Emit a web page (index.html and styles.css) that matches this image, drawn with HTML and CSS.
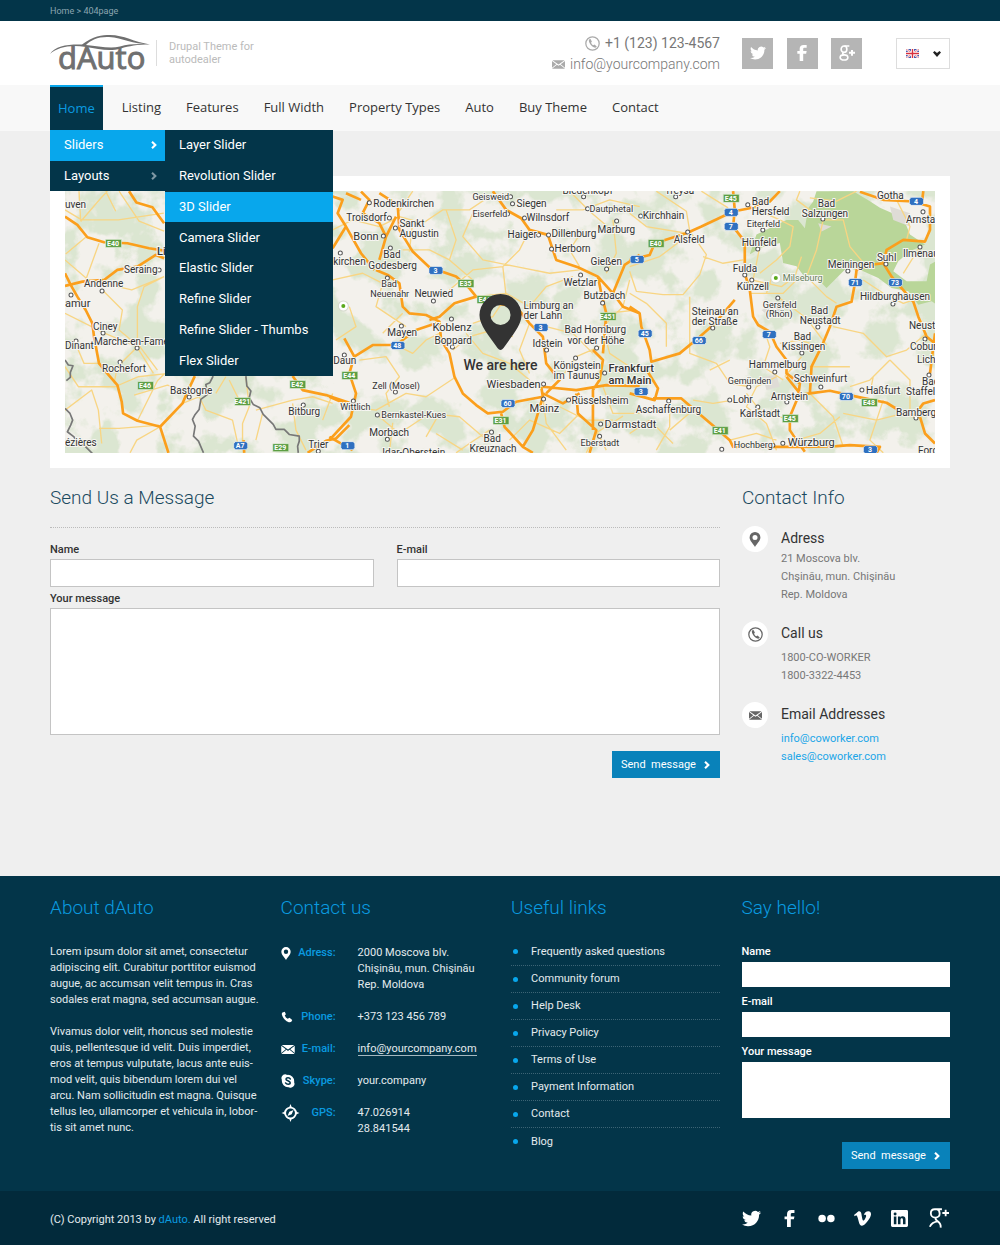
FILE: index.html
```html
<!DOCTYPE html>
<html lang="en">
<head>
<meta charset="utf-8">
<meta name="viewport" content="width=device-width, initial-scale=1">
<title>dAuto - Contact</title>
<link rel="stylesheet" href="styles.css">
</head>
<body>
<svg class="sprite" aria-hidden="true">
  <symbol id="twitter" viewBox="0 0 24 24"><path d="M23.953 4.57a10 10 0 01-2.825.775 4.958 4.958 0 002.163-2.723c-.951.555-2.005.959-3.127 1.184a4.92 4.92 0 00-8.384 4.482C7.69 8.095 4.067 6.13 1.64 3.162a4.822 4.822 0 00-.666 2.475c0 1.71.87 3.213 2.188 4.096a4.904 4.904 0 01-2.228-.616v.06a4.923 4.923 0 003.946 4.827 4.996 4.996 0 01-2.212.085 4.936 4.936 0 004.604 3.417 9.867 9.867 0 01-6.102 2.105c-.39 0-.779-.023-1.17-.067a13.995 13.995 0 007.557 2.209c9.053 0 13.998-7.496 13.998-13.985 0-.21 0-.42-.015-.63A9.935 9.935 0 0024 4.59z"/></symbol>
  <symbol id="facebook" viewBox="0 0 24 24"><path d="M8.500 24V13H5V9h3.500V6c0-4 2-6 6-6H19v4.200h-3c-1.600 0-2.200.8-2.200 2V9H19l-.8 4h-4.400v11z"/></symbol>
  <symbol id="gplus" viewBox="0 0 24 24"><g fill="none" stroke="currentColor" stroke-width="2.400"><ellipse cx="7.500" cy="6.300" rx="4.300" ry="4.800"/><path d="M8 1.500h7.500M7 11c-2.500 1.500-1.500 3 1 4"/><ellipse cx="7.500" cy="18.700" rx="5.800" ry="3.900"/></g><path d="M18 7.500h3v2.700h3v3h-3V16h-3v-2.800h-3v-3h3z"/></symbol>
  <symbol id="gplus-thin" viewBox="0 0 24 24"><g fill="none" stroke="currentColor" stroke-width="2.200"><path d="M15.500 1.500H7C4 1.500 2.200 3.600 2.200 6.200S4 11.500 7.500 11.500s5.300-2 5.300-5S11.500 2.200 9.500 1.500M8 11.500c-1 2 .5 3 2.500 4.500S14.500 19.500 14 23.500M10.500 16C6 16.500 3 18 1 22.500M16 6h8M20 2v8"/></g></symbol>
  <symbol id="vimeo" viewBox="0 0 24 24"><path d="M23.977 6.416c-.105 2.338-1.739 5.543-4.894 9.609-3.268 4.247-6.026 6.37-8.29 6.37-1.409 0-2.578-1.294-3.553-3.881L5.322 11.4C4.603 8.816 3.834 7.522 3.01 7.522c-.179 0-.806.378-1.881 1.132L0 7.197a315.065 315.065 0 003.501-3.128C5.08 2.701 6.266 1.984 7.055 1.91c1.867-.18 3.016 1.1 3.447 3.838.465 2.953.789 4.789.971 5.507.539 2.45 1.131 3.674 1.776 3.674.502 0 1.256-.796 2.265-2.385 1.004-1.589 1.54-2.797 1.612-3.628.144-1.371-.395-2.061-1.614-2.061-.574 0-1.167.121-1.777.391 1.186-3.868 3.434-5.757 6.762-5.637 2.473.06 3.628 1.664 3.493 4.797l-.013.01z"/></symbol>
  <symbol id="flickr" viewBox="0 0 24 24"><circle cx="5.800" cy="12" r="5.300"/><circle cx="18.200" cy="12" r="5.300"/></symbol>
  <symbol id="linkedin" viewBox="0 0 24 24"><path fill-rule="evenodd" d="M2 0h20a2 2 0 012 2v20a2 2 0 01-2 2H2a2 2 0 01-2-2V2a2 2 0 012-2zm2 9v11h3.600V9zM5.800 3.500a2.100 2.100 0 100 4.200 2.100 2.100 0 000-4.200zM9.800 9v11h3.600v-6c0-1.500.6-2.400 1.800-2.400s1.700.9 1.700 2.400v6h3.600v-6.700c0-3-1.500-4.600-3.900-4.600-1.600 0-2.600.8-3.200 1.800V9z"/></symbol>
  <symbol id="phone" viewBox="0 0 24 24"><path d="M7.500 1.500L3 3c-1.500 1-1.600 3-1 5 2 7 7 12 13.500 14.300 2.500.9 4.500.2 5.500-1.300l1.500-3-5.500-4.500-3.500 2c-2.500-1-4.800-3.600-6-6.500L9.800 6.500z"/></symbol>
  <symbol id="phone-ring" viewBox="0 0 24 24"><circle cx="12" cy="12" r="10.700" fill="none" stroke="currentColor" stroke-width="2"/><path d="M8.500 4.500L6.200 6c-.7 4 3.800 10.800 8.800 12.500 1.500.4 3-.3 3.800-1.800l-3.600-3-1.900 1.100c-1.600-.7-2.900-2.400-3.600-4.200l1.300-2z"/></symbol>
  <symbol id="mail" viewBox="0 0 24 16"><path d="M0 1.500L8 7.500 0 14zM24 1.500L16 7.500 24 14zM.8 0h22.400L12 8.200zM9.200 8.500L12 10.500l2.800-2L24 16H0z"/></symbol>
  <symbol id="pin" viewBox="0 0 24 32"><path fill-rule="evenodd" d="M12 0a11.500 11.500 0 0111.500 11.700C23.500 19 15.500 25 12 32 8.500 25 .5 19 .5 11.700A11.500 11.500 0 0112 0zm0 6.300a5.400 5.400 0 100 10.800 5.400 5.400 0 000-10.800z"/></symbol>
  <symbol id="skype" viewBox="0 0 24 24"><path d="M7 .5a6.500 6.500 0 013.500 1A11 11 0 0122.500 14 6.500 6.500 0 0113.500 22.500 11 11 0 011.500 10 6.500 6.500 0 017 .5z"/><path fill="none" stroke="#033549" stroke-width="2.600" stroke-linecap="round" d="M16 8.500C15 6 9 5.500 8.500 8.600 8.200 12 15.800 11 15.800 15c0 3.500-6.300 3.300-8 .3"/></symbol>
  <symbol id="compass" viewBox="0 0 24 24"><circle cx="12" cy="12" r="7.200" fill="none" stroke="currentColor" stroke-width="2.500"/><path d="M12 0l2 5h-4zM12 24l2-5h-4zM0 12l5-2v4zM24 12l-5-2v4zM16 8l-2.400 5.600L8 16l2.400-5.600z"/></symbol>
  <symbol id="chevron" viewBox="0 0 8 10"><path d="M0 1.800L1.800 0 7 5 1.800 10 0 8.200 3.200 5z"/></symbol>
  <symbol id="flag" viewBox="0 0 13 9"><path fill="#4a5ab0" d="M0 0h13v9H0z"/><path stroke="#fff" stroke-width="2" d="M0 0l13 9M13 0L0 9"/><path stroke="#d8434e" stroke-width=".6" d="M0 0l13 9M13 0L0 9"/><path stroke="#fff" stroke-width="3" d="M6.500 0v9M0 4.500h13"/><path stroke="#d8303e" stroke-width="1.400" d="M6.500 0v9M0 4.500h13"/></symbol>
  <symbol id="motorway" viewBox="0 0 15 9"><path fill="#2f70c0" stroke="#fff" stroke-width=".6" d="M2 .5h11l1.500 2v4l-1.500 2H2L.5 6.500v-4z"/></symbol>
  <symbol id="euroroute" viewBox="0 0 17 9"><path fill="#5c9e43" stroke="#e8f2e0" stroke-width=".6" d="M.5.5h16v8H.5z"/></symbol>
</svg>

<div class="topbar">
  <nav class="wrap" aria-label="Breadcrumb"><a href="#">Home</a> &gt; <a href="#">404page</a></nav>
</div>

<header class="header">
  <div class="wrap header-row">
    <a class="logo" href="#" aria-label="dAuto">
      <svg width="102" height="36" viewBox="0 0 102 36">
        <text class="logo-text" x="8" y="34">dAuto</text>
        <path fill="#707070" d="M0 19C5 11 18 9 32 9.500 43 1 52 0 60 0c14 0 24 7 40 9.500C82 9 73 3 59 2 48 1.500 41 5 36 10c12 1 24 4 34 1.500 9-2.500 18-3 30-2-13 0-21 1.500-29 4-12 3.500-22 .5-35-1.500C20 9.500 8 12 0 19z"/>
      </svg>
    </a>
    <p class="tagline">Drupal Theme for<br>autodealer</p>
    <address class="header-contact">
      <span class="header-phone"><svg width="15" height="15"><use href="#phone-ring"/></svg>+1 (123) 123-4567</span>
      <a class="header-mail" href="#"><svg width="13" height="9"><use href="#mail"/></svg>info@yourcompany.com</a>
    </address>
    <div class="header-tools">
      <a class="social" href="#" aria-label="Twitter"><svg width="16" height="16"><use href="#twitter"/></svg></a>
      <a class="social" href="#" aria-label="Facebook"><svg width="16" height="16"><use href="#facebook"/></svg></a>
      <a class="social" href="#" aria-label="Google Plus"><svg width="16" height="16"><use href="#gplus"/></svg></a>
      <div class="language">
        <select aria-label="Language"><option>EN</option></select>
        <svg class="flag" width="13" height="9"><use href="#flag"/></svg>
        <svg class="arrow" width="8" height="6" viewBox="0 0 8 6"><path d="M0 1.500L1.500 0 4 2 6.500 0 8 1.500 4 6z"/></svg>
      </div>
    </div>
  </div>
</header>

<nav class="mainnav" aria-label="Main">
  <ul class="wrap menu">
    <li class="current"><a href="#">Home</a>
      <div class="dropdown">
        <ul class="level-one">
          <li><a class="active" href="#">Sliders<svg width="7" height="8"><use href="#chevron"/></svg></a></li>
          <li><a href="#">Layouts<svg class="dim" width="7" height="8"><use href="#chevron"/></svg></a></li>
        </ul>
        <ul class="level-two">
          <li><a href="#">Layer Slider</a></li>
          <li><a href="#">Revolution Slider</a></li>
          <li><a class="active" href="#">3D Slider</a></li>
          <li><a href="#">Camera Slider</a></li>
          <li><a href="#">Elastic Slider</a></li>
          <li><a href="#">Refine Slider</a></li>
          <li><a href="#">Refine Slider - Thumbs</a></li>
          <li><a href="#">Flex Slider</a></li>
        </ul>
      </div>
    </li>
    <li><a href="#">Listing</a></li>
    <li><a href="#">Features</a></li>
    <li><a href="#">Full Width</a></li>
    <li><a href="#">Property Types</a></li>
    <li><a href="#">Auto</a></li>
    <li><a href="#">Buy Theme</a></li>
    <li><a href="#">Contact</a></li>
  </ul>
</nav>

<main class="wrap main">
  <div class="map-card">
    <svg class="map" viewBox="66 191 869 262" preserveAspectRatio="xMidYMid slice" role="img" aria-label="Map showing our office">
      <defs>
        <filter id="forest" x="0" y="0" width="100%" height="100%" color-interpolation-filters="sRGB"><feTurbulence type="fractalNoise" baseFrequency=".025" numOctaves="5" seed="8"/><feColorMatrix values="0 0 0 0 .86  0 0 0 0 .9  0 0 0 0 .82  9 0 0 0 -4.200"/></filter>
      </defs>
      <path fill="#f3f1ec" d="M66 191h869v262H66z"/>
      <path filter="url(#forest)" d="M66 191h869v262H66z"/>
      <g transform="translate(630 180) scale(.33333)">
        <path fill="#b9d699" d="M470 120l35 0 20 25 10-60 15-20 10-31h110l50 30 30 20 70 30 20 50 45 30-45 20-35 30-15 30 40 30 60 0 10-50 35-20v150l-30-20-40 10-30-40-50-10-40-30-45-20-50-10-60 60-20-20-40-5-30-40-40-10-10-60-60 15-30 20 20-60z"/>
        <path fill="#dfdcd6" d="M780 80l60 20 0 40-50-20zM400 590l40-5 10 35-40 10zM565 130l40 10-30 15zM395 390l50-25 20 20-40 30z"/>
      </g>
      <g class="thin">
        <g transform="translate(50 180) scale(.33333)">
          <path d="M48 90l50 30 110 0 136-20M90 34l5 90M95 125l60-70 20-21M150 190l-40 110M210 34l60 90 75 30M48 240l70 60 130 30 97-40M345 290l-60 30-20 60 0 110 60 80M160 330l60 60-10 60 60 50M48 400l120 60 95 40 50 80M75 480l30 70 45 0M48 560l40 60 110 0 70-30 90-10M265 500l-60 60-10 50M48 690l80-60 20 60 10 100M150 745l60 0 120-10M170 34l30 60M333 740l-70 40-20 38M265 722l60-120 20-20M400 670l50-20 20 40 80 30 20 90M590 590l10 90-20 50 0 60M540 600l30 60M620 690l110-30 60-10 60 20M730 670l10 80 30 60M850 640l-30 80M500 640l30-50M640 700l-20 80M415 635l-60-20-100 30M110 172l-60 50"/>
        </g>
        <g transform="translate(330 180) scale(.33333)">
          <path d="M10 150l60-30 80 20 60-30 70 20 60-40 80 0 60-40M250 34l-40 60M350 90l30 90-20 60 70 60M430 100l-30 70 60 70 100 20 100 20 90-10M220 210l80 0 60 30M10 300l90-20 60 30-20 70 90 60M60 380l20 60-60 40M90 540l80-10 40 60-40 50 10 40M190 490l60 30 40-40 40-20M370 510l50-40 70-20 60 20M360 330l70-60 90-10 50-50 30-60M440 350l90-10 70 40 50-60 80-30M600 600l-60-50-80-30-50-60M650 440l80 20 60 60M690 600l50-70 70-30M830 400l90-10M680 90l80 0 80-30 90 20M760 150l-40 60 30 50M850 120l10 100-30 60M720 34l60 60 70 60M380 590l-90 60-60-10-90 50-80-10M150 710l60 50 90-60 90 10 70 60M290 770l40-70M320 760l80 50M180 818l10-90M480 750l-60 40-40 28M540 780l60-60 90 40 60-60M640 650l10 80 60 80M690 680l80 40 80 0M800 750l30 60M820 620l30 80 80 0M770 818l30-60 80-50M520 260l10 90-40 60-60 20M600 430l-30 80 30 70M220 400l-60 60M900 300l-20 80-60 60 20 80 60 40M240 215l10-90"/>
        </g>
        <g transform="translate(630 180) scale(.33333)">
          <path d="M0 100l50 40 120 20M80 34l90 60 10 60 50 70-20 60-50 60-60 0-80-10-20-60M220 230l60 20 60-10M0 260l90-30 80-60M180 350l0 120 0 50 80 30 40 60 60 10M0 340l50 30 60 60 0 70M215 34l80 50M360 80l90 40 40 20-10 60-40 40-50 40M390 200l-20 100M365 300l90 20 40-30 20-60M360 340l100 0 50-50M450 355l80 60 60 80M400 440l20 60-20 60 60 40M530 290l60 60 30 20M530 290l30-80 20-90 60 0 20 80 50 60M580 120l-80-60 10-26M610 440l90 20 70 70 60-20 60-50M780 540l-60 60-60 20M780 540l60 60 0 100M515 530l-50 60M570 500l-60-20-60 10M440 590l-60 30-30 60 60 50 30 80M310 660l-60 10-60-10M350 640l40 50 90 30M120 660l0 80-40 70M190 690l-70 60M0 760l60-40 70 70M540 640l70 70 30 90M640 700l100 20 80-20M760 660l-40 120 40 38M700 300l60 40 60 30 60-20M680 34l-60 30-80-10M800 60l40 80-10 40M870 200l-50 80M730 590l-10 50M500 780l70-20 60-50M410 340l20-60M300 780l80-20 60 20M300 540l-60 30M540 560l120 0"/>
        </g>
      </g>
      <g class="border">
        <g transform="translate(50 180) scale(.33333)"><path d="M48 540l10 15 14 2-8 20 0 15-12 10M48 685l15 15 8 20-6 15-10 20 20 15 10 20 20 5 30 30M492 588l-10 20-12 5 5 30-20 15-5 30-12 15-8 15 8 20-5 30 15 15 15 35M590 588l3 30 12 15-5 20 12 20 20 10 10 20 30 30 8 15 25 0 15 15 30 5 0 15-5 15 2 20"/></g>
      </g>
      <g class="thick">
        <g transform="translate(50 180) scale(.33333)">
          <path d="M48 110l37 25 30 37 50 15 70 3 65 15 45 7M48 318l52-13 65-5 40-30 60-10 55-35 25 10M48 280l17 35 20 35 25 40 20 40 5 40 15 80 20 25 35 40 13 50 4 35 43 22 68 18 25 78M333 740l67-70 15-35 22-47M240 34l22 34 48 14 20 28 15 20M585 818l-2-38M730 588l30 42 70 15 70 23M900 735l-40 40-30 7-55 36"/>
        </g>
        <g transform="translate(330 180) scale(.33333)">
          <path d="M10 205l40-65 45 80 40 50M50 140L25 100 40 60 10 50M95 35l25 25-20 40 50 30 20 40M95 60L50 40M150 40l55 35 5 75 40 65 50 47 80 28 40 35 20 25-65 20-45 40-30 10M150 240l20-70 30-60M140 270l35 15 35 25 10 70 20 20 50 5 40 20 5 55 25 40 15 70 25 50 40 35 35 25 45-5 40-30 80-15-5-30M45 475l30 55 55-35 70 0 60-45 60-20M75 530l-15 50 20 60-15 70-65 70M0 650l70 30M0 770l70 40M490 34l40 56 45 25 25 35 55 15 25 75 65 22 60 28 10 50 15 60-10 120M805 290l45 50 35-85 45-30M850 340l30 40 50 20M500 370l60 10 40 50 40 40 10 80 40 50-40 40M640 620l100 10 90-15 100 3M740 640l5 60 55 50-20 68M515 700l10 40 55 60 30-50 30-100M790 510l30 30-10 60-20 30 0 120M640 640l60 30 50-30M580 800l30 18"/>
        </g>
        <g transform="translate(630 180) scale(.33333)">
          <path d="M0 240l60-15 15-35 95-30 45-20 95-45 50-10 60-20 30-31M310 34l5 56-5 50 35 45 0 95 15 50 10 80 15 25 35 20 20 45 30 40 0 40 40 30-5 40-25 60 0 40 20 30 25 35M0 380l30 20 5 40 25 70 5 35 85-25 60-50 40-35 65-75M70 655l85 0 35 30 70 60 40 35 10 20 150 0 60 0 100-2 40-3 90 5-10 18M540 640l5-80 30-60 25-60 20-60 45-15 10-55 5-40 40-15 40-5 25 40 65 75 15 45 25 60 25 20M690 36l70 24 90 5 50 15 0 70-15 35-65-5-50 30-10 40M880 34l-5 40M510 645l30-5 60-8 90 20 80 16 60 37 40 5 15 50 30 30M45 560l40 65-10 35-75-20M850 710l30-40 35-10M915 460l-15 120M470 590l40 50"/>
        </g>
      </g>
      <path class="towns" id="town-dots" d="M160 270h0M103 291h0M72 295h0M104 333h0M77 341h0M138 348h0M121 362h0M190 397h0M304 405h0M319 451h0M370 203h0M390 218h0M396 228h0M384 236h0M391 248h0M341 253h0M388 278h0M434 301h0M452 319h0M402 326h0M453 347h0M345 355h0M396 392h0M354 401h0M378 415h0M388 439h0M492 432h0M511 197h0M513 204h0M508 214h0M525 218h0M539 235h0M549 235h0M552 249h0M584 197h0M588 209h0M617 221h0M607 269h0M581 275h0M603 303h0M547 350h0M597 348h0M576 358h0M605 373h0M544 384h0M544 399h0M569 400h0M601 424h0M600 436h0M641 216h0M688 232h0M748 205h0M763 230h0M758 249h0M745 275h0M752 280h0M823 219h0M848 271h0M886 264h0M920 247h0M923 212h0M778 298h0M893 304h0M713 328h0M818 327h0M802 353h0M775 372h0M749 387h0M821 387h0M862 390h0M730 400h0M787 402h0M758 407h0M669 401h0M773 445h0M783 443h0M722 449h0M916 418h0M925 339h0M929 375h0M676 197h0"/>
      <path class="towns-in" d="M160 270h0M103 291h0M72 295h0M104 333h0M77 341h0M138 348h0M121 362h0M190 397h0M304 405h0M319 451h0M370 203h0M390 218h0M396 228h0M384 236h0M391 248h0M341 253h0M388 278h0M434 301h0M452 319h0M402 326h0M453 347h0M345 355h0M396 392h0M354 401h0M378 415h0M388 439h0M492 432h0M511 197h0M513 204h0M508 214h0M525 218h0M539 235h0M549 235h0M552 249h0M584 197h0M588 209h0M617 221h0M607 269h0M581 275h0M603 303h0M547 350h0M597 348h0M576 358h0M605 373h0M544 384h0M544 399h0M569 400h0M601 424h0M600 436h0M641 216h0M688 232h0M748 205h0M763 230h0M758 249h0M745 275h0M752 280h0M823 219h0M848 271h0M886 264h0M920 247h0M923 212h0M778 298h0M893 304h0M713 328h0M818 327h0M802 353h0M775 372h0M749 387h0M821 387h0M862 390h0M730 400h0M787 402h0M758 407h0M669 401h0M773 445h0M783 443h0M722 449h0M916 418h0M925 339h0M929 375h0M676 197h0"/>
      <g fill="#fff" stroke="#d5d9cc"><circle cx="344" cy="306" r="5"/><circle cx="776" cy="278" r="5"/></g>
      <g fill="#5ba91d"><circle cx="344" cy="306" r="2"/><circle cx="776" cy="278" r="2"/></g>
      <g class="town">
        <text x="66" y="208">uven</text><text x="125" y="273">Seraing</text><text x="85" y="287">Andenne</text><text x="66" y="307" class="mid">amur</text><text x="94" y="330">Ciney</text><text x="66" y="349">Dinant</text><text x="95" y="345">Marche-en-Famenne</text><text x="158" y="255" class="city">Liège</text><text x="103" y="372">Rochefort</text><text x="171" y="394">Bastogne</text><text x="66" y="446">ézières</text><text x="289" y="415">Bitburg</text><text x="309" y="448">Trier</text>
        <text x="374" y="207">Rodenkirchen</text><text x="347" y="221">Troisdorf</text><text x="354" y="240" class="mid">Bonn</text><text x="400" y="227">Sankt</text><text x="400" y="237">Augustin</text><text x="334" y="265">kirchen</text><text x="384" y="258">Bad</text><text x="369" y="269">Godesberg</text><text x="382" y="287" class="small">Bad</text><text x="371" y="297" class="small">Neuenahr</text><text x="415" y="297">Neuwied</text><text x="433" y="331" class="mid">Koblenz</text><text x="388" y="336">Mayen</text><text x="435" y="344">Boppard</text><text x="334" y="364">Daun</text><text x="373" y="389" class="small">Zell (Mosel)</text><text x="341" y="410" class="small">Wittlich</text><text x="382" y="418" class="small">Bernkastel-Kues</text><text x="370" y="436">Morbach</text><text x="383" y="456">Idar-Oberstein</text><text x="484" y="442">Bad</text><text x="470" y="452">Kreuznach</text>
        <text x="473" y="200" class="small">Geisweid</text><text x="517" y="207">Siegen</text><text x="473" y="217" class="small">Eiserfeld</text><text x="527" y="221">Wilnsdorf</text><text x="508" y="238">Haiger</text><text x="552" y="237">Dillenburg</text><text x="555" y="252">Herborn</text><text x="563" y="194">Biedenkopf</text><text x="590" y="212" class="small">Dautphetal</text><text x="598" y="233">Marburg</text><text x="591" y="265">Gießen</text><text x="564" y="286">Wetzlar</text><text x="584" y="299">Butzbach</text><text x="524" y="309">Limburg an</text><text x="524" y="319">der Lahn</text><text x="533" y="347">Idstein</text><text x="565" y="333">Bad Homburg</text><text x="568" y="344">vor der Höhe</text><text x="554" y="369">Königstein</text><text x="554" y="379">im Taunus</text><text x="609" y="372" class="city">Frankfurt</text><text x="609" y="384" class="city">am Main</text><text x="487" y="388" class="mid">Wiesbaden</text><text x="530" y="412" class="mid">Mainz</text><text x="572" y="404">Rüsselsheim</text><text x="605" y="428" class="mid">Darmstadt</text><text x="581" y="446" class="small">Eberstadt</text>
        <text x="665" y="194">Treysa</text><text x="643" y="219">Kirchhain</text><text x="674" y="243">Alsfeld</text><text x="752" y="205">Bad</text><text x="752" y="215">Hersfeld</text><text x="747" y="227" class="small">Eiterfeld</text><text x="742" y="246">Hünfeld</text><text x="733" y="272">Fulda</text><text x="737" y="290">Künzell</text><text x="783" y="281" fill="#667f5b" class="small">Milseburg</text><text x="763" y="308" class="small">Gersfeld</text><text x="766" y="317" class="small">(Rhön)</text><text x="692" y="315">Steinau an</text><text x="692" y="325">der Straße</text><text x="818" y="207">Bad</text><text x="802" y="217">Salzungen</text><text x="877" y="199">Gotha</text><text x="906" y="223">Arnstadt</text><text x="828" y="268">Meiningen</text><text x="877" y="261">Suhl</text><text x="903" y="257">Ilmenau</text><text x="860" y="300">Hildburghausen</text><text x="811" y="314">Bad</text><text x="800" y="324">Neustadt</text><text x="794" y="340">Bad</text><text x="782" y="350">Kissingen</text><text x="909" y="329">Neustadt</text><text x="910" y="350">Coburg</text><text x="917" y="363">Lichtenfels</text><text x="749" y="368">Hammelburg</text><text x="728" y="384" class="small">Gemünden</text><text x="794" y="382">Schweinfurt</text><text x="771" y="400">Arnstein</text><text x="866" y="394">Haßfurt</text><text x="922" y="385">Bad</text><text x="906" y="395">Staffelstein</text><text x="896" y="416">Bamberg</text><text x="733" y="403">Lohr</text><text x="740" y="417">Karlstadt</text><text x="636" y="413">Aschaffenburg</text><text x="734" y="448" class="small">Hochberg</text><text x="788" y="446" class="mid">Würzburg</text><text x="918" y="454">Forchheim</text>
      </g>
      <g>
        <use href="#euroroute" x="106" y="239" width="17" height="9"/><use href="#euroroute" x="138" y="381" width="17" height="9"/><use href="#euroroute" x="235" y="397" width="17" height="9"/><use href="#euroroute" x="290" y="380" width="17" height="9"/><use href="#euroroute" x="273" y="443" width="17" height="9"/><use href="#euroroute" x="458" y="279" width="17" height="9"/><use href="#euroroute" x="477" y="295" width="17" height="9"/><use href="#euroroute" x="342" y="371" width="17" height="9"/><use href="#euroroute" x="493" y="416" width="17" height="9"/><use href="#euroroute" x="600" y="312" width="17" height="9"/><use href="#euroroute" x="648" y="239" width="17" height="9"/><use href="#euroroute" x="723" y="194" width="17" height="9"/><use href="#euroroute" x="712" y="426" width="17" height="9"/><use href="#euroroute" x="782" y="414" width="17" height="9"/><use href="#euroroute" x="861" y="398" width="17" height="9"/>
        <use href="#motorway" x="429" y="266" width="15" height="9"/><use href="#motorway" x="391" y="341" width="15" height="9"/><use href="#motorway" x="341" y="441" width="15" height="9"/><use href="#motorway" x="501" y="399" width="15" height="9"/><use href="#motorway" x="534" y="323" width="15" height="9"/><use href="#motorway" x="630" y="255" width="15" height="9"/><use href="#motorway" x="638" y="329" width="15" height="9"/><use href="#motorway" x="634" y="387" width="15" height="9"/><use href="#motorway" x="724" y="208" width="15" height="9"/><use href="#motorway" x="724" y="222" width="15" height="9"/><use href="#motorway" x="692" y="336" width="15" height="9"/><use href="#motorway" x="762" y="330" width="15" height="9"/><use href="#motorway" x="848" y="278" width="15" height="9"/><use href="#motorway" x="888" y="278" width="15" height="9"/><use href="#motorway" x="839" y="392" width="15" height="9"/><use href="#motorway" x="909" y="197" width="15" height="9"/><use href="#motorway" x="863" y="445" width="15" height="9"/><use href="#motorway" x="234" y="441" width="15" height="9"/>
      </g>
      <g class="shield">
        <text x="114" y="246">E40</text><text x="146" y="388">E46</text><text x="243" y="404">E421</text><text x="298" y="387">E42</text><text x="281" y="450">E29</text><text x="466" y="286">E35</text><text x="485" y="302">E44</text><text x="350" y="378">E44</text><text x="501" y="423">E31</text><text x="608" y="319">E451</text><text x="656" y="246">E40</text><text x="731" y="201">E45</text><text x="720" y="433">E41</text><text x="790" y="421">E45</text><text x="869" y="405">E48</text>
        <text x="436" y="273">3</text><text x="398" y="348">48</text><text x="348" y="448">1</text><text x="508" y="406">60</text><text x="541" y="330">3</text><text x="637" y="262">5</text><text x="645" y="336">45</text><text x="641" y="394">3</text><text x="731" y="215">4</text><text x="731" y="229">7</text><text x="699" y="343">66</text><text x="769" y="337">7</text><text x="855" y="285">71</text><text x="895" y="285">73</text><text x="846" y="399">70</text><text x="916" y="204">4</text><text x="870" y="452">3</text><text x="241" y="448">A7</text>
      </g>
      <path fill="#333" fill-rule="evenodd" d="M501 294a21 21 0 0121 21c0 10-9 20-18 33q-3 4-6 0c-9-13-18-23-18-33a21 21 0 0121-21zm0 11a10 10 0 100 20 10 10 0 000-20z"/>
      <text class="here" x="501" y="370">We are here</text>
    </svg>
  </div>

  <div class="columns">
    <section>
      <h2 class="title">Send Us a Message</h2>
      <form class="message-form">
        <div class="field"><label for="name">Name</label><input id="name" type="text"></div>
        <div class="field"><label for="email">E-mail</label><input id="email" type="email"></div>
        <div class="field full"><label for="message">Your message</label><textarea id="message"></textarea></div>
        <button class="button" type="button">Send&nbsp; message<svg width="7" height="8"><use href="#chevron"/></svg></button>
      </form>
    </section>
    <aside>
      <h2 class="title">Contact Info</h2>
      <div class="info"><span class="bubble"><svg width="12" height="15"><use href="#pin"/></svg></span><div><h3>Adress</h3><p>21 Moscova blv.<br>Chşinău, mun. Chişinău<br>Rep. Moldova</p></div></div>
      <div class="info"><span class="bubble"><svg width="15" height="15"><use href="#phone-ring"/></svg></span><div><h3>Call us</h3><p>1800-CO-WORKER<br>1800-3322-4453</p></div></div>
      <div class="info"><span class="bubble"><svg width="13" height="9"><use href="#mail"/></svg></span><div><h3>Email Addresses</h3><p><a href="#">info@coworker.com</a><br><a href="#">sales@coworker.com</a></p></div></div>
    </aside>
  </div>
</main>

<footer class="footer">
  <div class="wrap footer-grid">
    <section>
      <h2>About dAuto</h2>
      <p>Lorem ipsum dolor sit amet, consectetur<br>adipiscing elit. Curabitur porttitor euismod<br>augue, ac accumsan velit tempus in. Cras<br>sodales erat magna, sed accumsan augue.</p>
      <p>Vivamus dolor velit, rhoncus sed molestie<br>quis, pellentesque id velit. Duis imperdiet,<br>eros at tempus vulputate, lacus ante euis-<br>mod velit, quis bibendum lorem dui vel<br>arcu. Nam sollicitudin est magna. Quisque<br>tellus leo, ullamcorper et vehicula in, lobor-<br>tis sit amet nunc.</p>
    </section>
    <section>
      <h2>Contact us</h2>
      <dl class="contacts">
        <div><dt><svg width="10" height="13"><use href="#pin"/></svg>Adress:</dt><dd>2000 Moscova blv.<br>Chişinău, mun. Chişinău<br>Rep. Moldova</dd></div>
        <div><dt><svg width="12" height="12"><use href="#phone"/></svg>Phone:</dt><dd>+373 123 456 789</dd></div>
        <div><dt><svg width="14" height="9"><use href="#mail"/></svg>E-mail:</dt><dd><a href="#">info@yourcompany.com</a></dd></div>
        <div><dt><svg width="14" height="14"><use href="#skype"/></svg>Skype:</dt><dd>your.company</dd></div>
        <div><dt><svg width="19" height="18"><use href="#compass"/></svg>GPS:</dt><dd>47.026914<br>28.841544</dd></div>
      </dl>
    </section>
    <section>
      <h2>Useful links</h2>
      <ul class="links">
        <li><a href="#">Frequently asked questions</a></li>
        <li><a href="#">Community forum</a></li>
        <li><a href="#">Help Desk</a></li>
        <li><a href="#">Privacy Policy</a></li>
        <li><a href="#">Terms of Use</a></li>
        <li><a href="#">Payment Information</a></li>
        <li><a href="#">Contact</a></li>
        <li><a href="#">Blog</a></li>
      </ul>
    </section>
    <section>
      <h2>Say hello!</h2>
      <form class="hello-form">
        <label for="hello-name">Name</label><input id="hello-name" type="text">
        <label for="hello-email">E-mail</label><input id="hello-email" type="email">
        <label for="hello-message">Your message</label><textarea id="hello-message"></textarea>
        <button class="button" type="button">Send&nbsp; message<svg width="7" height="8"><use href="#chevron"/></svg></button>
      </form>
    </section>
  </div>
  <div class="bottom">
    <div class="wrap bottom-row">
      <p>(C) Copyright 2013 by <a href="#">dAuto.</a> All right reserved</p>
      <div class="bottom-social">
        <a href="#" aria-label="Twitter"><svg width="19" height="19"><use href="#twitter"/></svg></a>
        <a href="#" aria-label="Facebook"><svg width="17" height="17"><use href="#facebook"/></svg></a>
        <a href="#" aria-label="Flickr"><svg width="17" height="17"><use href="#flickr"/></svg></a>
        <a href="#" aria-label="Vimeo"><svg width="17" height="17"><use href="#vimeo"/></svg></a>
        <a href="#" aria-label="LinkedIn"><svg width="17" height="17"><use href="#linkedin"/></svg></a>
        <a href="#" aria-label="Google Plus"><svg width="22" height="20"><use href="#gplus-thin"/></svg></a>
      </div>
    </div>
  </div>
</footer>
</body>
</html>
```
FILE: styles.css
```css
* { box-sizing: border-box; margin: 0; padding: 0; }
body { background: #efefef; color: #333; font: 11px/16px Roboto, "Noto Sans", sans-serif; }
a { color: inherit; text-decoration: none; }
ul { list-style: none; }
svg { fill: currentColor; flex: none; }
.sprite { position: absolute; width: 0; height: 0; }
.wrap { width: 100%; max-width: 1300px; margin: 0 auto; padding: 0 50px; }

.topbar { padding-top: 1px; background: #033549; color: #8ba5b0; font-size: 9px; line-height: 20px; }

.header { background: #fff; }
.header-row { display: flex; align-items: center; min-height: 64px; }
.logo { display: flex; margin-right: 4px; }
.logo svg { overflow: visible; }
.logo-text { font: 31px "Open Sans", "Noto Sans", sans-serif; fill: #707070; stroke: #707070; stroke-width: 1px; }
.tagline { border-left: 1px solid #ddd; padding: 0 12px; color: #bbb; line-height: 13px; }
.header-contact { display: flex; flex-direction: column; align-items: flex-end; margin-left: auto; margin-right: 22px; padding-top: 2px; color: #777; font-size: 14px; font-style: normal; line-height: 21px; }
.header-phone, .header-mail { display: flex; align-items: center; gap: 5px; }
.header-contact svg { color: #aaa; }
.header-mail { font-weight: 300; }
.header-tools { display: flex; justify-content: space-between; width: 208px; }
.social { display: flex; align-items: center; justify-content: center; width: 31px; height: 31px; background: #b5b5b5; color: #fff; }
.language { position: relative; width: 54px; height: 31px; margin-left: 20px; }
.language select { width: 100%; height: 100%; appearance: none; background: #fff; border: 1px solid #ddd; border-radius: 0; color: transparent; }
.language svg { position: absolute; pointer-events: none; }
.flag { left: 10px; top: 11px; }
.arrow { right: 9px; top: 13px; color: #222; }

.mainnav { background: #f8f8f8; font: 13px/45px "Open Sans", "Noto Sans", sans-serif; }
.menu { display: flex; gap: 25px; height: 46px; }
.current { position: relative; margin-right: -6px; }
.current > a { display: block; height: 45px; padding: 0 8px; border-top: 2px solid #08a7ec; background: #033549; color: #0a9be0; line-height: 43px; }
.dropdown { position: absolute; z-index: 2; top: 45px; left: 0; display: flex; align-items: flex-start; color: #fff; font: 13px/16px Roboto, "Noto Sans", sans-serif; }
.dropdown ul { display: flex; flex-direction: column; background: #033549; }
.dropdown li { display: flex; flex: 1; }
.dropdown a { display: flex; flex: 1; align-items: center; justify-content: space-between; padding: 0 7px 0 14px; }
.dropdown .active { background: #08a7ec; }
.dropdown .level-one { width: 115px; height: 61px; }
.dropdown .level-two { width: 168px; height: 246px; }
.dim { color: #7e98a4; }

.main { padding-top: 45px; padding-bottom: 98px; }
.map-card { background: #fff; padding: 15px; margin-bottom: 19px; }
.map { display: block; width: 100%; height: 262px; }
.thin { fill: none; stroke: #f8d583; stroke-width: 4; stroke-linejoin: round; }
.thick { fill: none; stroke: #fb9f1c; stroke-width: 8; stroke-linejoin: round; }
.border { fill: none; stroke: #777; stroke-width: 5; stroke-linejoin: round; }
.towns { fill: none; stroke: #555; stroke-width: 5; stroke-linecap: round; }
.towns-in { fill: none; stroke: #fff; stroke-width: 3; stroke-linecap: round; }
.town { font-size: 10px; fill: #333; stroke: #f6f5f1; stroke-width: 2px; paint-order: stroke; }
.town .small { font-size: 9px; }
.town .mid { font-size: 11px; }
.town .city { font-size: 11px; font-weight: 500; }
.shield { font-size: 7px; font-weight: 700; fill: #fff; text-anchor: middle; }
.here { font-size: 14px; font-weight: 500; fill: #333; text-anchor: middle; }

.columns { display: grid; grid-template-columns: 1fr 208px; gap: 22px; }
.title { color: #1b4a5f; font-size: 19px; font-weight: 300; line-height: 22px; }
.message-form { display: grid; grid-template-columns: 1fr 1fr; gap: 4px 23px; margin-top: 18px; padding-top: 14px; border-top: 1px dotted #bbb; }
.field { display: flex; flex-direction: column; gap: 1px; }
.field label { font-weight: 500; }
.full { grid-column: 1 / -1; }
input, textarea { display: block; width: 100%; height: 28px; padding: 4px; border: 1px solid #c4c4c4; border-radius: 0; background: #fff; font: inherit; resize: none; }
.full textarea { height: 127px; }
.button { display: flex; align-items: center; justify-content: space-between; justify-self: end; width: 108px; height: 27px; padding: 0 9px; border: 0; background: #0982ba; color: #fff; font: inherit; }
.message-form .button { grid-column: 2; margin-top: 12px; }

.info { display: flex; gap: 13px; margin-top: 17px; color: #777; line-height: 18px; }
.info h3 { color: #333; font-size: 14px; font-weight: 400; line-height: 24px; }
.info + .info h3 { margin-bottom: 4px; }
.info a { color: #1ba6e8; }
.bubble { display: flex; align-items: center; justify-content: center; flex: none; width: 26px; height: 26px; border-radius: 50%; background: #fff; color: #666; }

.footer { background: #033549; color: #e4ebee; }
.footer-grid { display: grid; grid-template-columns: repeat(4, 1fr); gap: 22px; min-height: 315px; padding-top: 21px; padding-bottom: 21px; }
.footer h2 { margin-bottom: 25px; color: #0a9be0; font-size: 19px; font-weight: 300; line-height: 22px; }
.footer-grid p { white-space: nowrap; }
.footer-grid p + p { margin-top: 16px; }
.contacts { display: grid; gap: 16px; padding-top: 1px; }
.contacts > div { display: flex; gap: 22px; }
.contacts dt { display: flex; justify-content: space-between; align-items: center; width: 55px; height: 16px; color: #0a9be0; font-weight: 500; }
.contacts svg { color: #fff; }
.contacts dd a { border-bottom: 1px solid #a5b8c0; }
.links li { display: flex; align-items: center; gap: 13px; height: 27px; border-bottom: 1px dotted #3d6475; }
.links li:first-child { height: 22px; padding-bottom: 6px; }
.links li:last-child { border: 0; }
.links li::before { content: ""; width: 5px; height: 5px; margin-left: 2px; border-radius: 50%; background: #08a7ec; }
.hello-form { display: grid; }
.hello-form label { color: #fff; font-weight: 500; }
.hello-form input { height: 25px; margin: 2px 0 7px; border: 0; }
.hello-form textarea { height: 56px; margin: 2px 0 24px; border: 0; }
.bottom { background: #022a3b; }
.bottom-row { display: flex; align-items: center; justify-content: space-between; min-height: 54px; }
.bottom p { padding-top: 3px; }
.bottom a { color: #0a9be0; }
.bottom-social { display: flex; align-items: center; justify-content: space-between; width: 208px; }
.bottom .bottom-social a { display: flex; color: #fff; }
```
